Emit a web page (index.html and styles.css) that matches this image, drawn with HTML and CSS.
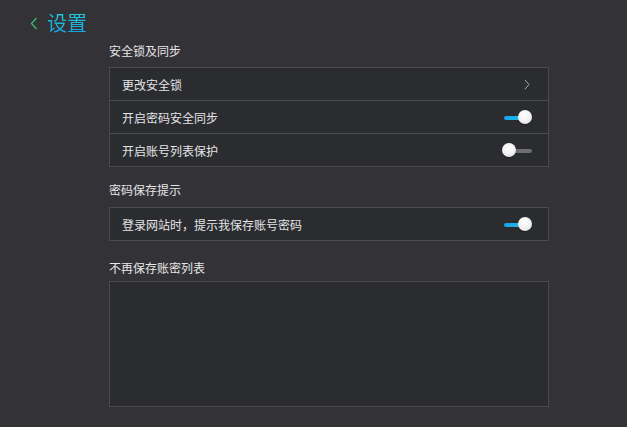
FILE: index.html
```html
<!DOCTYPE html>
<html lang="zh-CN">
<head>
<meta charset="utf-8">
<title>设置</title>
<link rel="stylesheet" href="styles.css">
</head>
<body>
<div class="header">
  <svg class="back" width="8" height="13" viewBox="0 0 8 13"><path d="M6.5 1 L1.5 6.5 L6.5 12" fill="none" stroke="#3cc36e" stroke-width="1.2"/></svg>
  <span class="title">设置</span>
</div>
<div class="content">
  <div class="section-title first">安全锁及同步</div>
  <div class="box">
    <div class="row"><span>更改安全锁</span>
      <svg class="arrow" width="6" height="11" viewBox="0 0 6 11"><path d="M0.8 0.8 L5 5.5 L0.8 10.2" fill="none" stroke="#a9a9ad" stroke-width="1"/></svg>
    </div>
    <div class="row"><span>开启密码安全同步</span><div class="toggle on"><div class="track"></div><div class="thumb"></div></div></div>
    <div class="row"><span>开启账号列表保护</span><div class="toggle off"><div class="track"></div><div class="thumb"></div></div></div>
  </div>
  <div class="section-title second">密码保存提示</div>
  <div class="box box2">
    <div class="row"><span>登录网站时，提示我保存账号密码</span><div class="toggle on"><div class="track"></div><div class="thumb"></div></div></div>
  </div>
  <div class="section-title third">不再保存账密列表</div>
  <div class="box list"></div>
</div>
</body>
</html>
```
FILE: styles.css
```css
html, body {
  margin: 0;
  padding: 0;
  background: #333237;
  font-family: "Noto Sans CJK SC", "Noto Sans", sans-serif;
  color: #e4e4e6;
}
.header {
  display: flex;
  align-items: center;
  padding: 13px 0 0 30px;
  height: 20px;
}
.back {
  margin-right: 9px;
  margin-top: 0;
}
.title {
  font-size: 20px;
  line-height: 20px;
  color: #1cb3dc;
  background: linear-gradient(180deg, #22cbd6 0%, #1a9fe0 100%);
  -webkit-background-clip: text;
  background-clip: text;
  -webkit-text-fill-color: transparent;
}
.content {
  margin-left: 109px;
  width: 440px;
}
.section-title {
  font-size: 12px;
  line-height: 20px;
  color: #e6e6e8;
}
.section-title.first { margin-top: 8px; margin-bottom: 6px; }
.section-title.second { margin-top: 13px; margin-bottom: 7px; }
.section-title.third { margin-top: 17px; margin-bottom: 3px; }
.box {
  background: #2b2c30;
  border: 1px solid #4a4a4f;
  box-sizing: border-box;
}
.row {
  height: 32px;
  display: flex;
  align-items: center;
  justify-content: space-between;
  padding-left: 12px;
  font-size: 12px;
  color: #e4e4e6;
}
.row + .row {
  border-top: 1px solid #4a4a4f;
}
.arrow {
  margin-right: 18px;
}
.toggle {
  position: relative;
  width: 30px;
  height: 15px;
  margin-right: 16px;
}
.toggle .track {
  position: absolute;
  top: 6px;
  height: 4px;
  border-radius: 2px;
}
.toggle.on .track {
  left: 2px;
  width: 20px;
  background: linear-gradient(90deg, #1aa0e6, #1cc0f0);
}
.toggle.off .track {
  left: 8px;
  right: 0;
  background: #6c6e72;
}
.toggle .thumb {
  position: absolute;
  top: 0;
  width: 14px;
  height: 14px;
  border-radius: 50%;
  background: radial-gradient(circle at 45% 35%, #ffffff 0%, #f0f0f0 55%, #d4d4d6 100%);
  box-shadow: 0 1px 1px rgba(0,0,0,0.35);
}
.toggle.on .thumb { right: 0; }
.toggle.off .thumb { left: 0; }
.box.list {
  height: 126px;
}
```
